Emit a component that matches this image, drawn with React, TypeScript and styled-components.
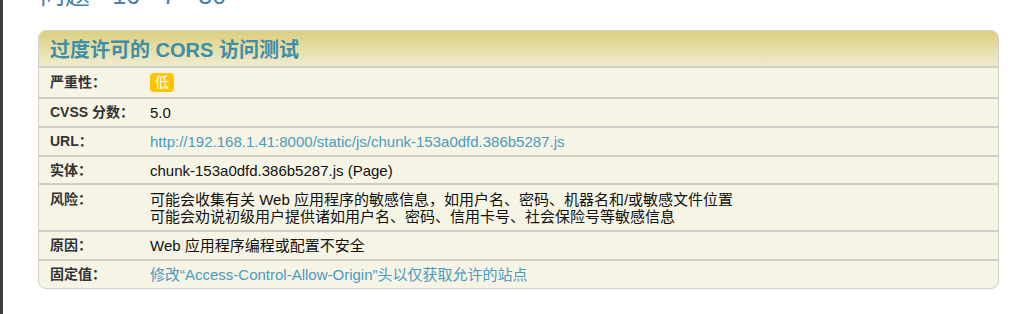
import React from "react";
import styled, { createGlobalStyle } from "styled-components";

const Global = createGlobalStyle`
  html, body { margin: 0; padding: 0; background: #fff; }
  body { font-family: "Liberation Sans", Arial, "Noto Sans CJK SC", sans-serif; overflow: hidden; }
`;

const Page = styled.div`
  width: 1013px;
  height: 314px;
  display: flex;
  background: #fff;
  overflow: hidden;
`;

const Edge = styled.div`
  width: 3px;
  flex: none;
  background: #3a3d40;
`;

const Content = styled.div`
  flex: 1;
  display: flex;
  flex-direction: column;
  padding: 0 14px 0 35px;
`;

const TopBar = styled.div`
  height: 30px;
  display: flex;
  justify-content: space-between;
  align-items: flex-start;
  overflow: hidden;
`;

const PageTitle = styled.div`
  margin-top: -19px;
  margin-left: 2px;
  font-size: 25px;
  line-height: 28px;
  color: #4a80ab;
  white-space: pre;
`;

const SideMark = styled.div`
  margin-top: -20px;
  margin-right: 3px;
  font-size: 22px;
  line-height: 24px;
  color: #9cc8e0;
`;

const Card = styled.div`
  border: 1px solid #d3d1c6;
  border-radius: 8px;
  background: #f6f4e4;
  overflow: hidden;
`;

const Header = styled.div`
  height: 35px;
  background: linear-gradient(to bottom, #dbcf80 0%, #e6dea6 50%, #f0ebcf 100%);
  display: flex;
  align-items: center;
  padding: 0 11px;
  font-weight: bold;
  font-size: 20px;
  color: #3d8ea8;
`;

const Row = styled.div<{ $h?: number }>`
  display: flex;
  border-top: 2px solid #d0cec6;
  min-height: ${(p) => p.$h ?? 29}px;
  align-items: center;
  padding: 0 11px;
  box-sizing: border-box;
`;

const TallRow = styled(Row)`
  align-items: flex-start;
  padding-top: 6px;
  padding-bottom: 5px;
`;

const Label = styled.div`
  width: 100px;
  flex: none;
  font-weight: bold;
  font-size: 14px;
  line-height: 17px;
  color: #333;
`;

const Value = styled.div<{ $link?: boolean }>`
  font-size: 15px;
  line-height: 17px;
  color: ${(p) => (p.$link ? "#4a9bbf" : "#111")};
`;

const Badge = styled.span`
  display: inline-block;
  background: #fdc400;
  color: #fff;
  font-size: 14px;
  line-height: 19px;
  padding: 0 5px;
  border-radius: 4px;
  vertical-align: middle;
`;

export default function App() {
  return (
    <Page>
      <Global />
      <Edge />
      <Content>
        <TopBar>
          <PageTitle>{"问题 - 16 - 7 - 30"}</PageTitle>
          <SideMark>30</SideMark>
        </TopBar>
        <Card>
          <Header>过度许可的 CORS 访问测试</Header>
          <Row $h={31}>
            <Label>严重性：</Label>
            <Value>
              <Badge>低</Badge>
            </Value>
          </Row>
          <Row>
            <Label>CVSS 分数：</Label>
            <Value>5.0</Value>
          </Row>
          <Row>
            <Label>URL：</Label>
            <Value $link>http://192.168.1.41:8000/static/js/chunk-153a0dfd.386b5287.js</Value>
          </Row>
          <Row $h={28}>
            <Label>实体：</Label>
            <Value>chunk-153a0dfd.386b5287.js (Page)</Value>
          </Row>
          <TallRow>
            <Label>风险：</Label>
            <Value>
              可能会收集有关 Web 应用程序的敏感信息，如用户名、密码、机器名和/或敏感文件位置
              <br />
              可能会劝说初级用户提供诸如用户名、密码、信用卡号、社会保险号等敏感信息
            </Value>
          </TallRow>
          <Row>
            <Label>原因：</Label>
            <Value>Web 应用程序编程或配置不安全</Value>
          </Row>
          <Row>
            <Label>固定值：</Label>
            <Value $link>修改“Access-Control-Allow-Origin”头以仅获取允许的站点</Value>
          </Row>
        </Card>
      </Content>
    </Page>
  );
}
